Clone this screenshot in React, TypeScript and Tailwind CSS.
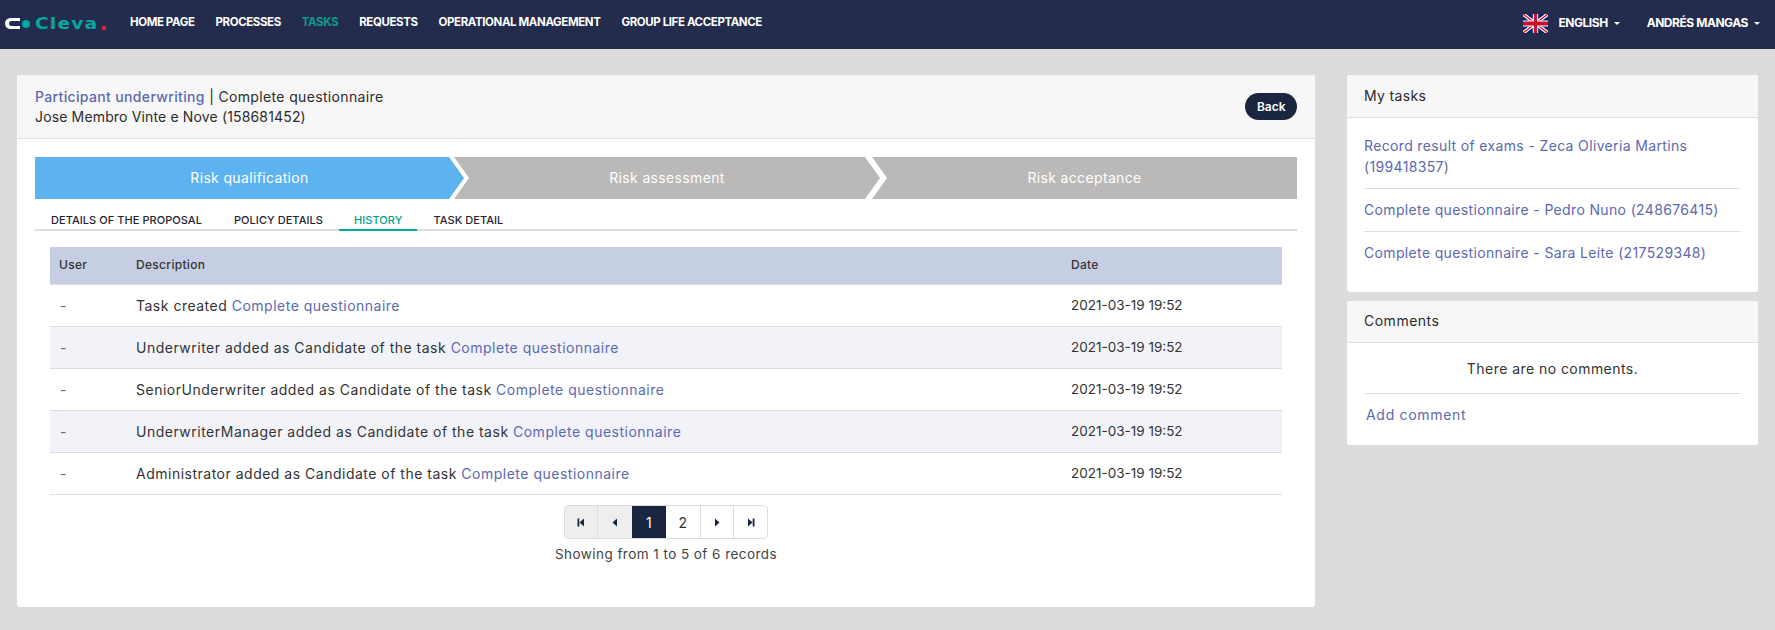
import React from "react";

const navItems = ["HOME PAGE", "PROCESSES", "TASKS", "REQUESTS", "OPERATIONAL MANAGEMENT", "GROUP LIFE ACCEPTANCE"];

const rows = [
  { prefix: "Task created", bg: "bg-white" },
  { prefix: "Underwriter added as Candidate of the task", bg: "bg-[#f2f3f9]" },
  { prefix: "SeniorUnderwriter added as Candidate of the task", bg: "bg-white" },
  { prefix: "UnderwriterManager added as Candidate of the task", bg: "bg-[#f2f3f9]" },
  { prefix: "Administrator added as Candidate of the task", bg: "bg-white" },
];

const tasks = [
  "Record result of exams - Zeca Oliveria Martins (199418357)",
  "Complete questionnaire - Pedro Nuno (248676415)",
  "Complete questionnaire - Sara Leite (217529348)",
];

const Logo = () => (
  <div className="flex items-center w-[115px] h-[12px] mt-[1px] shrink-0">
    <svg width="15" height="11" viewBox="0 0 15 11" className="ml-[5px] shrink-0">
      <path d="M5.5 0H15V3H6.5a2.5 2.5 0 0 0 0 5H15v3H5.5a5.5 5.5 0 0 1 0-11z" fill="#fff" />
    </svg>
    <span className="w-[8px] h-[8px] rounded-full bg-[#00a99d] ml-[2px] shrink-0" />
    <span className="ml-[5px] mt-[2px] w-[67px] shrink-0 origin-left scale-x-[1.2] text-[15.5px] leading-none font-bold tracking-[1px] text-[#00a99d] font-['DejaVu_Sans',sans-serif]">Cleva</span>
    <span className="w-[4px] h-[4px] bg-[#d4213d] mt-[8px] shrink-0" />
  </div>
);

const Flag = () => (
  <svg width="25" height="19" viewBox="0 0 60 40" preserveAspectRatio="none">
    <rect width="60" height="40" fill="#012169" />
    <path d="M0 0L60 40M60 0L0 40" stroke="#fff" strokeWidth="8" />
    <path d="M0 0L60 40M60 0L0 40" stroke="#c8102e" strokeWidth="3" />
    <path d="M30 0V40M0 20H60" stroke="#fff" strokeWidth="13" />
    <path d="M30 0V40M0 20H60" stroke="#c8102e" strokeWidth="8" />
  </svg>
);

const Caret = () => <span className="ml-[6px] w-0 h-0 border-x-[3.5px] border-x-transparent border-t-[3.5px] border-t-white" />;

const PageIcon = ({ dir, end }: { dir: "left" | "right"; end?: boolean }) => (
  <svg width="8" height="9" viewBox="0 0 8 9">
    {dir === "left" ? (
      <>
        {end && <rect x="0.5" y="0.5" width="1.8" height="8" fill="#1a2540" />}
        <path d={end ? "M7 0.5V8.5L2.5 4.5z" : "M6 0.5V8.5L1.5 4.5z"} fill="#1a2540" />
      </>
    ) : (
      <>
        <path d={end ? "M1 0.5V8.5L5.5 4.5z" : "M2 0.5V8.5L6.5 4.5z"} fill="#1a2540" />
        {end && <rect x="5.7" y="0.5" width="1.8" height="8" fill="#1a2540" />}
      </>
    )}
  </svg>
);

export default function App() {
  return (
    <div className="min-h-[630px] bg-[#dcdcdc] font-['Inter',sans-serif] text-[14px] tracking-[0.35px] text-[#333]">
      <header className="h-[49px] bg-[#232c4d] flex items-center pb-[3px]">
        <Logo />
        <nav className="flex items-center gap-[21px] ml-[15px] text-[11.5px] font-bold tracking-[-0.4px]">
          {navItems.map((item) => (
            <span key={item} className={item === "TASKS" ? "text-[#0f9a8a]" : "text-white"}>
              {item}
            </span>
          ))}
        </nav>
        <div className="ml-auto flex items-center text-[12px] font-bold tracking-[-0.45px] text-white pr-[15px]">
          <Flag />
          <span className="ml-[10px]">ENGLISH</span>
          <Caret />
          <span className="ml-[27px]">ANDRÉS MANGAS</span>
          <Caret />
        </div>
      </header>

      <main className="flex items-start gap-[32px] pl-[17px] pr-[17px] pt-[26px]">
        <section className="w-[1298px] h-[532px] bg-white rounded-[3px] shrink-0">
          <div className="h-[64px] bg-[#f7f7f7] border-b border-[#dfdfdf] rounded-t-[3px] pl-[18px] pr-[18px] flex items-center justify-between">
            <div className="leading-[20px] text-[#2b2b2b]">
              <div>
                <span className="text-[#5c69b0] font-medium">Participant underwriting</span> | Complete questionnaire
              </div>
              <div className="tracking-[0.15px]">Jose Membro Vinte e Nove (158681452)</div>
            </div>
            <button className="h-[27px] px-[11.5px] rounded-full bg-[#1a2540] text-white text-[12px] font-semibold tracking-normal">Back</button>
          </div>

          <div className="px-[18px] pt-[18px]">
            <div className="flex h-[42px] text-white">
              <div className="w-[429px] pb-[2px] bg-[#5cb3f0] flex items-center justify-center [clip-path:polygon(0_0,calc(100%-15px)_0,100%_50%,calc(100%-15px)_100%,0_100%)]">
                Risk qualification
              </div>
              <div className="w-[426px] pb-[2px] -ml-[10px] bg-[#bab9b7] flex items-center justify-center [clip-path:polygon(0_0,calc(100%-15px)_0,100%_50%,calc(100%-15px)_100%,0_100%,15px_50%)]">
                Risk assessment
              </div>
              <div className="flex-1 pb-[2px] -ml-[8px] bg-[#bab9b7] flex items-center justify-center [clip-path:polygon(0_0,100%_0,100%_100%,0_100%,15px_50%)]">
                Risk acceptance
              </div>
            </div>

            <div className="flex h-[21px] mt-[11px] border-b-2 border-[#dcdcdc] text-[11px] leading-[20px] tracking-[0.05px] font-medium text-[#1f2430]">
              <span className="px-[16px] whitespace-nowrap">DETAILS OF THE PROPOSAL</span>
              <span className="px-[16px] whitespace-nowrap">POLICY DETAILS</span>
              <span className="px-[15px] h-[21px] border-b-2 border-[#00a99d] text-[#00a08f] whitespace-nowrap">HISTORY</span>
              <span className="px-[16px] whitespace-nowrap">TASK DETAIL</span>
            </div>

            <div className="mx-[15px] mt-[16px]">
              <div className="flex items-center h-[38px] pb-[1px] bg-[#c6cee3] text-[12px] font-medium tracking-[0.3px] text-[#333] border-b border-[#dfdfdf]">
                <span className="w-[86px] pl-[9px]">User</span>
                <span className="flex-1">Description</span>
                <span className="w-[211px]">Date</span>
              </div>
              {rows.map((row) => (
                <div key={row.prefix} className={`flex items-center h-[42px] border-b border-[#dcdcdc] text-[14px] tracking-[0.5px] ${row.bg}`}>
                  <span className="w-[86px] pl-[10px] text-[#666]">-</span>
                  <span className="flex-1">
                    {row.prefix} <span className="text-[#5c69b0]">Complete questionnaire</span>
                  </span>
                  <span className="w-[211px] text-[13.5px] tracking-normal">2021-03-19 19:52</span>
                </div>
              ))}
            </div>

            <div className="flex flex-col items-center mt-[10px]">
              <div className="flex h-[34px] border border-[#dcdcdc] rounded-[4px] overflow-hidden text-[14px]">
                <span className="w-[33px] bg-[#eeeeee] border-r border-[#dcdcdc] flex items-center justify-center"><PageIcon dir="left" end /></span>
                <span className="w-[34px] bg-[#eeeeee] flex items-center justify-center"><PageIcon dir="left" /></span>
                <span className="w-[34px] bg-[#1a2540] text-white flex items-center justify-center">1</span>
                <span className="w-[35px] border-r border-[#dcdcdc] flex items-center justify-center">2</span>
                <span className="w-[33px] border-r border-[#dcdcdc] flex items-center justify-center"><PageIcon dir="right" /></span>
                <span className="w-[33px] flex items-center justify-center"><PageIcon dir="right" end /></span>
              </div>
              <div className="mt-[5px] text-[13.5px] leading-[20px] tracking-[0.45px] text-[#444]">Showing from 1 to 5 of 6 records</div>
            </div>
          </div>
        </section>

        <aside className="flex-1 flex flex-col gap-[9px]">
          <div className="h-[217px] bg-white rounded-[3px]">
            <div className="h-[43px] pb-[2px] bg-[#f7f7f7] border-b border-[#dfdfdf] rounded-t-[3px] pl-[17px] flex items-center text-[#2b2b2b]">My tasks</div>
            <div className="px-[17px] pt-[17px] text-[#5c69b0] leading-[21px]">
              {tasks.map((task, i) => (
                <div key={task} className={i < 2 ? "pb-[11px] mb-[10px] border-b border-[#dfdfdf]" : ""}>
                  {task}
                </div>
              ))}
            </div>
          </div>
          <div className="h-[144px] bg-white rounded-[3px]">
            <div className="h-[42px] pb-[2px] bg-[#f7f7f7] border-b border-[#dfdfdf] rounded-t-[3px] pl-[17px] flex items-center text-[#2b2b2b] tracking-[0.5px]">Comments</div>
            <div className="px-[17px]">
              <div className="h-[51px] flex items-center justify-center border-b border-[#dfdfdf] tracking-[0.45px]">There are no comments.</div>
              <div className="mt-[10px] pl-[2px] leading-[21px] tracking-[0.7px] text-[#5c69b0]">Add comment</div>
            </div>
          </div>
        </aside>
      </main>
    </div>
  );
}
